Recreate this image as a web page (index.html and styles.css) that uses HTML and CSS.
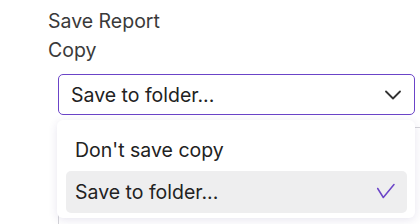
FILE: index.html
```html
<!DOCTYPE html>
<html lang="en">
<head>
    <meta charset="UTF-8">
    <meta name="viewport" content="width=device-width, initial-scale=1.0">
    <title>Save Report</title>
    <link rel="stylesheet" href="styles.css">
</head>
<body>
    <div class="panel">
        <div class="section-title">Save Report</div>
        <div class="field-label">Copy</div>
        <div class="field">
            <div class="select">
                <span>Save to folder...</span>
                <svg class="chevron" width="16" height="16" viewBox="0 0 16 16">
                    <path d="M1 4.5 L8 11.5 L15 4.5" fill="none" stroke="#333" stroke-width="1.8" stroke-linecap="round" stroke-linejoin="round"/>
                </svg>
            </div>
            <div class="next-box"></div>

            <ul class="menu">
                <li class="menu-item">Don't save copy</li>
                <li class="menu-item active">
                    <span>Save to folder...</span>
                    <svg class="check" width="20" height="18" viewBox="0 0 20 18">
                        <path d="M2.7 5.5 L8.3 14.5 L19 1.5" fill="none" stroke="#6b44c8" stroke-width="1.5" stroke-linecap="round" stroke-linejoin="round"/>
                    </svg>
                </li>
            </ul>
        </div>
    </div>
</body>
</html>
```

FILE: styles.css
```css
body {
    margin: 0;
    padding: 0;
    background: #ffffff;
    font-family: Inter, "Noto Sans", sans-serif;
    color: #3a3a3a;
}

.panel {
    padding: 7px 0 0 48px;
}

.section-title,
.field-label {
    font-size: 19.5px;
    line-height: 29px;
}

.field {
    position: relative;
    margin: 9px 5px 0 10px;
}

.select {
    display: flex;
    align-items: center;
    justify-content: space-between;
    height: 39px;
    padding: 0 13px 0 12px;
    border: 1px solid #6b44c8;
    border-radius: 5px;
    font-size: 19.5px;
    color: #222;
}

.chevron {
    display: block;
}

.next-box {
    height: 120px;
    margin-top: 12px;
    margin-right: -20px;
    border: 1px solid #d4d4d8;
    border-radius: 5px;
}

.menu {
    position: absolute;
    top: 46px;
    left: -1px;
    right: 0;
    margin: 0;
    padding: 9px 8px 5px 9px;
    list-style: none;
    background: #ffffff;
    border-radius: 6px;
    box-shadow: 0 2px 10px rgba(60, 40, 120, 0.12);
}

.menu-item {
    display: flex;
    align-items: center;
    justify-content: space-between;
    height: 42px;
    padding: 0 12px 0 9px;
    border-radius: 5px;
    font-size: 19.5px;
    color: #222;
}

.menu-item.active {
    background: #eeeeef;
}

.check {
    display: block;
}
```
